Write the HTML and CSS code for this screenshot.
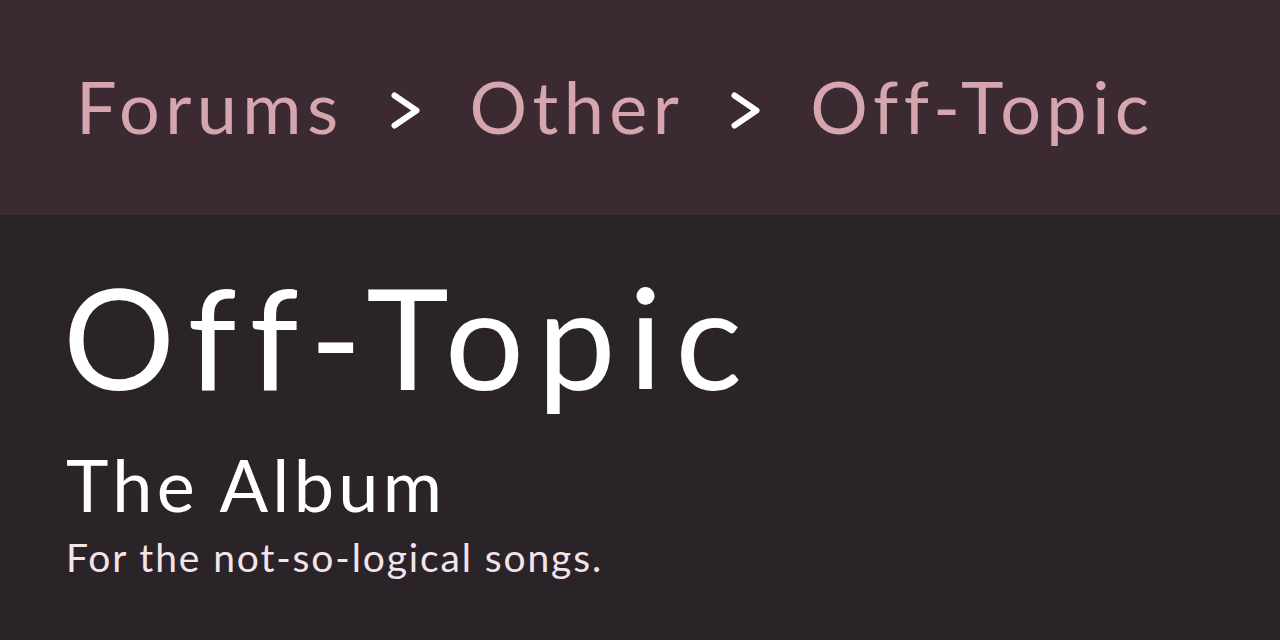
FILE: index.html
```html
<!DOCTYPE html>
<html lang="en">
<head>
    <meta charset="UTF-8">
    <title>Off-Topic</title>
    <link rel="stylesheet" href="styles.css">
</head>
<body>
    <nav class="crumbs">
        <a href="#" class="crumb">Forums</a>
        <svg class="sep" width="29" height="37" viewBox="0 0 29 37"><polyline points="3.5,3.5 25.5,18.5 3.5,33.5" fill="none" stroke="#fff" stroke-width="6" stroke-linecap="round" stroke-linejoin="round"/></svg>
        <a href="#" class="crumb">Other</a>
        <svg class="sep" width="29" height="37" viewBox="0 0 29 37"><polyline points="3.5,3.5 25.5,18.5 3.5,33.5" fill="none" stroke="#fff" stroke-width="6" stroke-linecap="round" stroke-linejoin="round"/></svg>
        <a href="#" class="crumb">Off-Topic</a>
    </nav>
    <main class="forum-head">
        <h1 class="title">Off-Topic</h1>
        <h2 class="subtitle">The Album</h2>
        <p class="blurb">For the not-so-logical songs.</p>
    </main>
</body>
</html>
```

FILE: styles.css
```css
body {
    margin: 0;
    font-family: 'Lato', 'DejaVu Sans', sans-serif;
    background-color: #2a2328;
    color: #fff;
    height: 640px;
    overflow: hidden;
}
.crumbs {
    height: 215px;
    box-sizing: border-box;
    background-color: #3c2a33;
    display: flex;
    align-items: center;
    padding: 0 0 3px 76px;
}
.crumb {
    color: #d6a6ae;
    text-decoration: none;
    font-size: 72px;
    line-height: 1;
    letter-spacing: 0.075em;
}
.sep {
    margin: 8px 50px 0 47px;
}
.forum-head {
    padding: 51px 0 0 63px;
}
.title {
    margin: 0;
    font-size: 140px;
    font-weight: 400;
    line-height: 1;
    letter-spacing: 0.093em;
}
.subtitle {
    margin: 42px 0 0 3px;
    font-size: 72px;
    font-weight: 400;
    line-height: 1;
    letter-spacing: 0.06em;
}
.blurb {
    margin: 18px 0 0 3px;
    font-size: 39px;
    line-height: 1;
    letter-spacing: 0.048em;
    color: #f4e4ea;
}
```
